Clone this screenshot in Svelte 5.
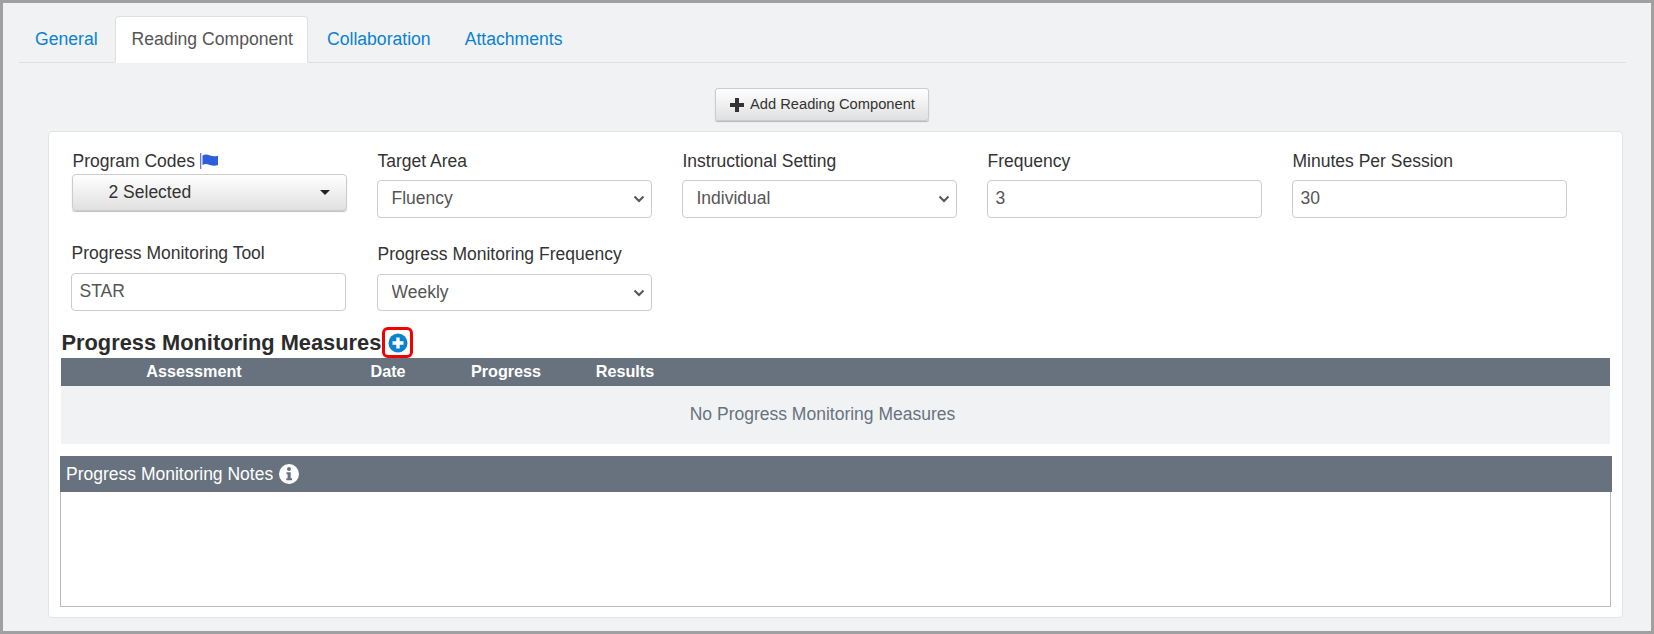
<script>
  const columns = [
    { label: 'Assessment', width: 266 },
    { label: 'Date', width: 122 },
    { label: 'Progress', width: 114 },
    { label: 'Results', width: 124 }
  ];
</script>

<div class="page">
  <nav class="tabs">
    <a class="tab">General</a>
    <a class="tab active">Reading Component</a>
    <a class="tab">Collaboration</a>
    <a class="tab">Attachments</a>
  </nav>

  <div class="actions">
    <button class="btn add">
      <svg class="plus" viewBox="0 0 14 14" width="14" height="14"><path d="M5 0h4v5h5v4H9v5H5V9H0V5h5z" fill="#333"/></svg>
      <span class="add-text">Add Reading Component</span>
    </button>
  </div>

  <section class="card">
    <div class="form">
      <div class="field">
        <label class="label tight">Program Codes
          <svg class="flag" viewBox="0 0 18 16" width="18" height="16">
            <rect x="0" y="0" width="1.3" height="16" fill="#6f74e6"/>
            <path d="M2.500 2.500C5 1 7.500 1.500 10 2.500s5.500 1 8 0.200V12c-2.500 1-5.500 1-8 0S5 10.500 2.500 12z" fill="#2d5fdb"/>
          </svg>
        </label>
        <button class="btn multi"><span>2 Selected</span><i class="caret"></i></button>
      </div>
      <div class="field">
        <label class="label">Target Area</label>
        <select class="control"><option>Fluency</option></select>
      </div>
      <div class="field">
        <label class="label">Instructional Setting</label>
        <select class="control"><option>Individual</option></select>
      </div>
      <div class="field">
        <label class="label">Frequency</label>
        <input class="control" value="3" />
      </div>
      <div class="field">
        <label class="label">Minutes Per Session</label>
        <input class="control" value="30" />
      </div>
      <div class="field second tool">
        <label class="label low">Progress Monitoring Tool</label>
        <input class="control" value="STAR" />
      </div>
      <div class="field second shifted">
        <label class="label low">Progress Monitoring Frequency</label>
        <select class="control short"><option>Weekly</option></select>
      </div>
    </div>

    <div class="heading">
      <h3>Progress Monitoring Measures</h3>
      <span class="highlight">
        <svg viewBox="0 0 20 20" width="20" height="20">
          <circle cx="10" cy="10" r="9.500" fill="#0b82cf"/>
          <path d="M8.300 4.500h3.400v3.800h3.800v3.400h-3.800v3.800H8.300v-3.800H4.500V8.300h3.800z" fill="#fff"/>
        </svg>
      </span>
    </div>

    <div class="table-head">
      {#each columns as c}
        <div class="th" style="width:{c.width}px">{c.label}</div>
      {/each}
    </div>
    <div class="empty">No Progress Monitoring Measures</div>

    <div class="notes">
      <div class="notes-head">
        Progress Monitoring Notes
        <svg viewBox="0 0 20 20" width="20" height="20">
          <circle cx="10" cy="10" r="10" fill="#fff"/>
          <circle cx="10" cy="5" r="2" fill="#67727e"/>
          <path d="M7.500 8.200h4.200v6h1.300v2.100H7.300v-2.100h1.300v-3.900H7.500z" fill="#67727e"/>
        </svg>
      </div>
      <div class="notes-body"></div>
    </div>
  </section>
</div>

<style>
  :global(body) {
    margin: 0;
    background: #f1f2f4;
  }
  .page {
    box-sizing: border-box;
    width: 1654px;
    height: 634px;
    border: 3px solid #a0a0a0;
    background: #f1f2f4;
    font-family: "Liberation Sans", Arial, sans-serif;
    font-size: 16px;
    color: #333;
    padding: 13px 25px 0 15px;
  }
  .tabs {
    display: flex;
    box-sizing: border-box;
    height: 47px;
    margin-left: 1px;
    border-bottom: 1px solid #dcdfe3;
  }
  .tab {
    box-sizing: border-box;
    height: 47px;
    margin-right: 2px;
    padding: 12px 14px 0 16px;
    font-size: 17.6px;
    line-height: 20px;
    color: #0b82cf;
    border: 1px solid transparent;
  }
  .tab:first-child { margin-left: -1px; }
  .tab.active {
    color: #555;
    background: #fff;
    border-color: #dcdfe3;
    border-bottom-color: #fff;
    border-radius: 4px 4px 0 0;
  }
  .actions {
    display: flex;
    justify-content: center;
    padding: 25px 0 10px;
  }
  .btn {
    font-family: inherit;
    color: #333;
    background: linear-gradient(#fff, #e0e0e0);
    border: 1px solid #ccc;
    border-radius: 3px;
    box-shadow: 0 1px 1px rgba(0, 0, 0, 0.25);
    cursor: pointer;
  }
  .add {
    display: flex;
    align-items: center;
    gap: 6px;
    box-sizing: border-box;
    width: 214px;
    height: 33px;
    padding: 0 0 0 14px;
    font-size: 14.7px;
    white-space: nowrap;
  }
  .add-text { margin-top: -2px; }
  .plus { flex: none; }
  .card {
    box-sizing: border-box;
    width: 1575px;
    height: 487px;
    margin-left: 30px;
    padding: 19px 12px 0;
    background: #fff;
    border: 1px solid #e3e4e6;
    border-radius: 4px;
  }
  .form {
    display: grid;
    grid-template-columns: repeat(5, 275.5px);
    grid-template-rows: 67px 1fr;
    column-gap: 29.5px;
    padding-left: 10.5px;
    height: 176px;
  }
  .field {
    display: flex;
    flex-direction: column;
  }
  .field.second {
    margin-top: 25px;
  }
  .field.shifted {
    margin-top: 26px;
  }
  .field.tool {
    margin-left: -1px;
    margin-right: 1px;
  }
  .label {
    display: flex;
    align-items: center;
    gap: 5px;
    height: 20px;
    line-height: 20px;
    margin: 0 0 9px 1px;
    font-size: 17.5px;
    color: #333;
  }
  .label.tight { margin-bottom: 3px; }
  .label.low { margin-bottom: 10px; }
  .flag { flex: none; margin-top: -1px; }
  .control {
    box-sizing: border-box;
    width: 100%;
    height: 38px;
    padding: 0 8px 2px;
    font-family: inherit;
    font-size: 17.5px;
    color: #555;
    background-color: #fff;
    border: 1px solid #ccc;
    border-radius: 4px;
    outline: none;
  }
  select.control {
    padding-left: 14px;
    appearance: none;
    background-image: url("data:image/svg+xml,%3Csvg xmlns='http://www.w3.org/2000/svg' width='12' height='8'%3E%3Cpath d='M1.500 1.500 6 6l4.500-4.500' fill='none' stroke='%23555' stroke-width='2'/%3E%3C/svg%3E");
    background-repeat: no-repeat;
    background-position: right 6px center;
  }
  .control.short { height: 37px; }
  .multi {
    display: flex;
    align-items: center;
    justify-content: space-between;
    box-sizing: border-box;
    width: 100%;
    height: 37px;
    padding: 0 16px 0 36px;
    font-size: 17.5px;
    border-radius: 4px;
  }
  .caret {
    width: 0;
    height: 0;
    border-left: 5px solid transparent;
    border-right: 5px solid transparent;
    border-top: 5px solid #222;
  }
  .heading {
    display: flex;
    align-items: center;
    height: 31px;
    margin-left: 0.5px;
  }
  h3 {
    margin: 0;
    font-size: 21.8px;
    font-weight: 700;
    color: #2b2b2b;
  }
  .highlight {
    display: flex;
    align-items: center;
    justify-content: center;
    box-sizing: border-box;
    width: 31px;
    height: 31px;
    margin-left: 1px;
    border: 3px solid #f00000;
    border-radius: 6px;
  }
  .table-head {
    display: flex;
    align-items: center;
    box-sizing: border-box;
    width: 1549px;
    height: 28px;
    padding-bottom: 2px;
    background: #67727e;
  }
  .th {
    text-align: center;
    font-weight: 700;
    font-size: 16.2px;
    color: #fff;
  }
  .empty {
    display: flex;
    align-items: center;
    justify-content: center;
    box-sizing: border-box;
    width: 1549px;
    height: 58px;
    padding: 0 26px 2px 0;
    background: #f1f2f4;
    font-size: 17.5px;
    color: #67727e;
  }
  .notes {
    width: 1552px;
    margin: 12px 0 0 -1px;
  }
  .notes-head {
    display: flex;
    align-items: center;
    gap: 6px;
    box-sizing: border-box;
    height: 36px;
    padding-left: 6px;
    font-size: 17.5px;
    color: #fff;
    background: #67727e;
  }
  .notes-body {
    box-sizing: border-box;
    height: 115px;
    margin-right: 1px;
    background: #fff;
    border: 1px solid #bbb;
    border-width: 0 1.5px 1px 1px;
  }
</style>
